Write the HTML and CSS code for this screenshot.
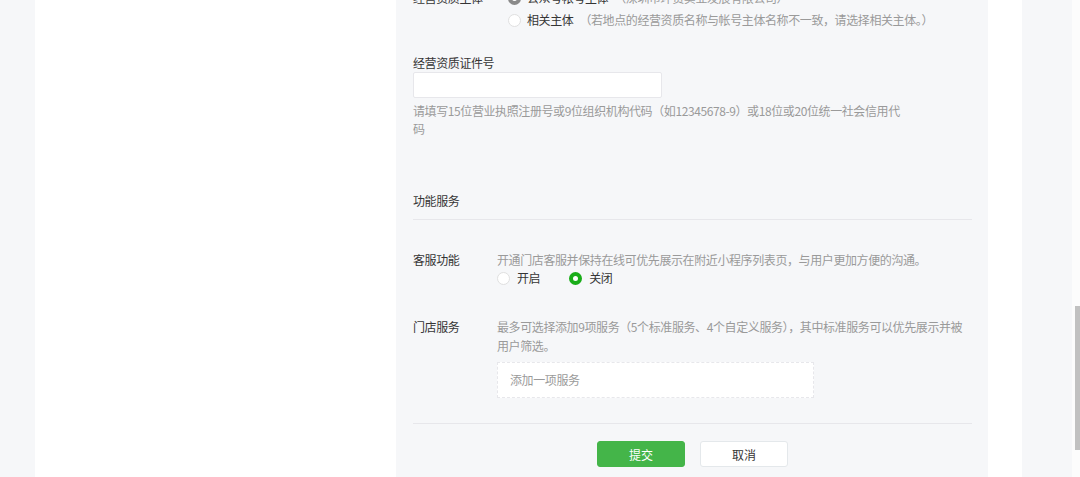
FILE: index.html
```html
<!DOCTYPE html>
<html lang="zh-CN">
<head>
<meta charset="utf-8">
<title>门店信息</title>
<link rel="stylesheet" href="styles.css">
</head>
<body>
<div class="page">
  <div class="gutter"></div>
  <div class="main">
    <div class="side"></div>
    <div class="panel">
      <div class="radio-block">
        <div class="radio-line">
          <span class="rlabel">经营资质主体</span>
          <span class="radio dark"></span>
          <span class="rtext">公众号帐号主体</span>
          <span class="rhint">（深圳市环贸实业发展有限公司）</span>
        </div>
        <div class="radio-line">
          <span class="rlabel"></span>
          <span class="radio"></span>
          <span class="rtext">相关主体</span>
          <span class="rhint">（若地点的经营资质名称与帐号主体名称不一致，请选择相关主体。）</span>
        </div>
      </div>

      <div class="field">
        <div class="flabel">经营资质证件号</div>
        <div class="input"></div>
        <div class="fhint">请填写15位营业执照注册号或9位组织机构代码（如12345678-9）或18位或20位统一社会信用代码</div>
      </div>

      <div class="section-title">功能服务</div>

      <div class="row row-kf">
        <div class="label">客服功能</div>
        <div class="content">
          <div class="desc">开通门店客服并保持在线可优先展示在附近小程序列表页，与用户更加方便的沟通。</div>
          <div class="choices">
            <span class="choice"><span class="radio"></span><span class="ctext">开启</span></span>
            <span class="choice"><span class="radio on"></span><span class="ctext">关闭</span></span>
          </div>
        </div>
      </div>

      <div class="row row-md">
        <div class="label">门店服务</div>
        <div class="content">
          <div class="desc">最多可选择添加9项服务（5个标准服务、4个自定义服务），其中标准服务可以优先展示并被用户筛选。</div>
          <div class="addbox">添加一项服务</div>
        </div>
      </div>

      <div class="actions">
        <button class="btn primary">提交</button>
        <button class="btn">取消</button>
      </div>
    </div>
    <div class="side-r"></div>
  </div>
  <div class="right"></div>
  <div class="scroll"><div class="thumb"></div></div>
</div>
</body>
</html>
```

FILE: styles.css
```css
html, body {
  margin: 0;
  padding: 0;
  height: 100%;
  overflow: hidden;
}
body {
  font-family: "Noto Sans CJK SC", "Liberation Sans", sans-serif;
  font-size: 12px;
  letter-spacing: -0.4px;
  color: #353535;
  background: #f6f7f9;
}
.page {
  display: flex;
  height: 477px;
}
.gutter {
  width: 35px;
  background: #f6f7f9;
}
.main {
  width: 987px;
  background: #fff;
  display: flex;
}
.side {
  width: 361px;
}
.side-r {
  width: 34px;
}
.panel {
  width: 592px;
  background: #f6f7f9;
  padding: 0 16px 0 17px;
  box-sizing: border-box;
  overflow: hidden;
}
.right {
  flex: 1;
  background: #f6f7f9;
}
.scroll {
  width: 8px;
  background: #fcfcfc;
  padding-top: 306px;
  box-sizing: border-box;
}
.thumb {
  margin-left: 3px;
  width: 5px;
  height: 144px;
  background: #c1c1c1;
}

/* top radio group */
.radio-block {
  margin-top: -13px;
}
.radio-line {
  display: flex;
  align-items: center;
  height: 22px;
  line-height: 22px;
}
.rlabel {
  width: 95px;
  flex: none;
}
.rtext {
  margin-left: 6px;
  color: #353535;
}
.rhint {
  margin-left: 6px;
  color: #9a9a9a;
}

.radio {
  width: 11px;
  height: 11px;
  border: 1px solid #e0e0e0;
  border-radius: 50%;
  background: #fff;
  flex: none;
  box-sizing: content-box;
}
.radio.on {
  width: 5px;
  height: 5px;
  border: 4px solid #1aad19;
}
.radio.dark {
  width: 5px;
  height: 5px;
  border: 4px solid #8a8a8a;
}

/* certificate field */
.field {
  margin-top: 23px;
}
.flabel {
  line-height: 18px;
  color: #353535;
}
.input {
  width: 249px;
  height: 26px;
  box-sizing: border-box;
  background: #fff;
  border: 1px solid #e7e7eb;
  border-radius: 2px;
}
.fhint {
  width: 492px;
  margin-top: 4px;
  line-height: 18px;
  color: #9a9a9a;
}

.section-title {
  margin-top: 54px;
  line-height: 18px;
  padding-bottom: 9px;
  border-bottom: 1px solid #e7e7eb;
  color: #353535;
}

.row {
  display: flex;
}
.row .label {
  width: 84px;
  flex: none;
  color: #353535;
}
.row .content {
  flex: 1;
}
.row-kf {
  margin-top: 31px;
  line-height: 18px;
}
.desc {
  color: #9a9a9a;
}
.choices {
  display: flex;
  gap: 29px;
  height: 18px;
  align-items: center;
}
.choice {
  display: flex;
  align-items: center;
}
.ctext {
  margin-left: 7px;
  color: #353535;
}

.row-md {
  margin-top: 30px;
  line-height: 19px;
}
.addbox {
  width: 317px;
  height: 36px;
  box-sizing: border-box;
  margin-top: 7px;
  background: #fff;
  border: 1px dashed #e7e7eb;
  padding-left: 12px;
  line-height: 34px;
  color: #9a9a9a;
}

.actions {
  margin-top: 25px;
  border-top: 1px solid #e7e7eb;
  padding-top: 17px;
  display: flex;
  justify-content: center;
  gap: 15px;
}
.btn {
  width: 88px;
  height: 26px;
  border-radius: 3px;
  border: 1px solid #e4e8eb;
  background: #fff;
  color: #353535;
  font-family: "Noto Sans CJK SC", "Liberation Sans", sans-serif;
  font-size: 12px;
  padding: 0;
  cursor: pointer;
}
.btn.primary {
  background: #44b549;
  border-color: #44b549;
  color: #fff;
}
```
